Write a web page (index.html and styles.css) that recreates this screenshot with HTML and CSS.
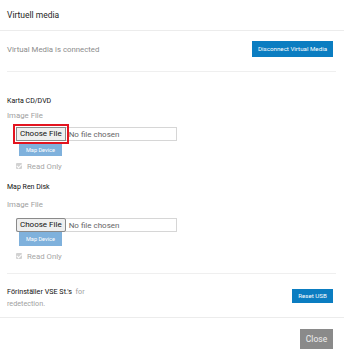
FILE: index.html
```html
<!DOCTYPE html>
<html lang="sv">
<head>
  <meta charset="UTF-8">
  <title>Virtuell media</title>
  <meta name="viewport" content="width=device-width, initial-scale=1.0">
  <link rel="stylesheet" href="styles.css">
</head>
<body>

  <div class="modal">
    <div class="modal-header">Virtuell media</div>

    <div class="status">
      <span class="status-text">Virtual Media is connected</span>
      <button class="btn btn-blue btn-disconnect">Disconnect Virtual Media</button>
    </div>

    <div class="rule"></div>

    <div class="media">
      <div class="media-title first">Karta CD/DVD</div>
      <div class="field-label">Image File</div>
      <div class="file-row">
        <span class="choose-btn highlight">Choose File</span>
        <span class="file-name">No file chosen</span>
      </div>
      <button class="btn btn-map">Map Device</button>
      <label class="read-only"><span class="check"></span>Read Only</label>

      <div class="media-title second">Map Ren Disk</div>
      <div class="field-label second">Image File</div>
      <div class="file-row second">
        <span class="choose-btn">Choose File</span>
        <span class="file-name">No file chosen</span>
      </div>
      <button class="btn btn-map second">Map Device</button>
      <label class="read-only"><span class="check"></span>Read Only</label>
    </div>

    <div class="rule lower"></div>

    <div class="usb-row">
      <div class="usb-text"><span class="dark">Förinställer VSE St.'s</span>&nbsp; for<br>redetection.</div>
      <button class="btn btn-blue btn-reset">Reset USB</button>
    </div>

    <div class="modal-footer">
      <button class="btn btn-close">Close</button>
    </div>
  </div>

</body>
</html>
```

FILE: styles.css
```css
body {
  margin: 0;
  padding: 0;
  font-family: "Roboto", "Liberation Sans", sans-serif;
  background: #ffffff;
  color: #222;
}

.modal {
  width: 344px;
  height: 355px;
  background: #fff;
}

.modal-header {
  height: 30px;
  display: flex;
  align-items: center;
  padding: 0 7px;
  font-size: 8.5px;
  color: #1e1e1e;
  border-bottom: 1px solid #ececec;
}

.status {
  margin-top: 10px;
  height: 16px;
  padding: 0 11px 0 7px;
  display: flex;
  align-items: center;
  justify-content: space-between;
}

.status-text {
  font-size: 7.8px;
  color: #8c8c8c;
}

.btn {
  border: none;
  padding: 0;
  font-family: inherit;
  color: #fff;
  cursor: pointer;
}

.btn-blue {
  background: #0b7dc1;
  font-size: 6.2px;
}

.btn-disconnect {
  width: 81px;
  height: 16px;
}

.rule {
  margin: 14px 8px 0 7px;
  border-top: 1px solid #efefef;
}

.media {
  padding-left: 7px;
}

.media-title {
  font-size: 7px;
  line-height: 10px;
  color: #111;
}

.media-title.first {
  margin-top: 24px;
}

.media-title.second {
  margin-top: 11px;
}

.field-label {
  margin-top: 5px;
  font-size: 7.8px;
  line-height: 10px;
  color: #a0a0a0;
}

.field-label.second {
  margin-top: 8px;
}

.file-row {
  margin: 6px 0 0 9px;
  width: 161px;
  height: 14px;
  box-sizing: border-box;
  border: 1px solid #d6d6d6;
  display: flex;
  align-items: center;
}

.file-row.second {
  margin-top: 8px;
}

.choose-btn {
  height: 14px;
  box-sizing: border-box;
  margin: -1px 0 0 -1px;
  padding: 0 3px;
  display: flex;
  align-items: center;
  font-size: 8px;
  color: #111;
  background: #efefef;
  border: 1px solid #8a8a8a;
  border-radius: 2px;
}

.choose-btn.highlight {
  border-radius: 0;
  outline: 2px solid #e3141f;
  outline-offset: 1px;
}

.file-name {
  margin-left: 3px;
  font-size: 8px;
  color: #666;
}

.btn-map {
  display: block;
  margin: 2px 0 0 12px;
  width: 43px;
  height: 13px;
  background: #7fb1dc;
  font-size: 5.6px;
}

.btn-map.second {
  margin-top: 0;
  height: 14px;
}

.read-only {
  margin: 5px 0 0 9px;
  height: 10px;
  display: flex;
  align-items: center;
  font-size: 7.8px;
  color: #a6a6a6;
}

.check {
  width: 6px;
  height: 6px;
  margin-right: 5px;
  border-radius: 1px;
  background: #d2d2d2;
  position: relative;
}

.check::after {
  content: "";
  position: absolute;
  left: 2px;
  top: 0;
  width: 1.5px;
  height: 3.5px;
  border: solid #fff;
  border-width: 0 1px 1px 0;
  transform: rotate(45deg);
}

.rule.lower {
  margin-top: 12px;
}

.usb-row {
  margin-top: 12px;
  padding: 0 11px 0 7px;
  display: flex;
  align-items: flex-start;
  justify-content: space-between;
}

.usb-text {
  font-size: 7.2px;
  line-height: 12px;
  color: #a0a0a0;
}

.usb-text .dark {
  color: #111;
}

.btn-reset {
  margin-top: 3px;
  width: 41px;
  height: 14px;
}

.modal-footer {
  margin-top: 7px;
  border-top: 1px solid #ececec;
  padding: 11px 11px 0 0;
  display: flex;
  justify-content: flex-end;
}

.btn-close {
  width: 33px;
  height: 20px;
  background: #8a8a8a;
  color: #eeeeee;
  font-size: 8.5px;
}
```
